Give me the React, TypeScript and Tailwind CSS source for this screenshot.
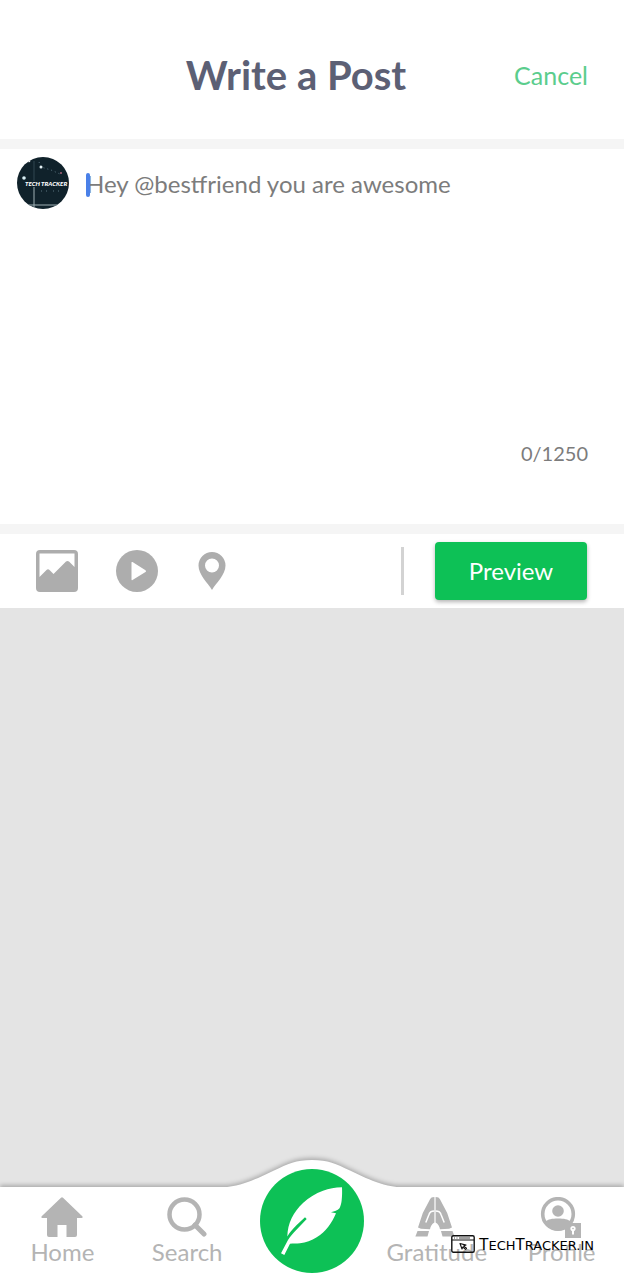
import React from "react";

function Avatar() {
  return (
    <svg viewBox="0 0 52 52" className="size-13 shrink-0" role="img" aria-label="Tech Tracker">
      <defs>
        <clipPath id="avatar-clip">
          <circle cx="26" cy="26" r="26" />
        </clipPath>
      </defs>
      <g clipPath="url(#avatar-clip)">
        <rect width="52" height="52" fill="#10222b" />
        <path d="M17 30v22M8 48h34" stroke="#9fb0b5" strokeWidth="1" />
        <path d="M17 4v20" stroke="#3b525c" strokeWidth=".8" />
        <path d="M22 5l2 5 10 3 9 4" stroke="#5b7480" strokeWidth="1" strokeDasharray="1 3" fill="none" />
        <path d="M24 34h8M36 34h7" stroke="#5b7480" strokeWidth="1" strokeDasharray="1 4" />
        <circle cx="24" cy="10" r="1.5" fill="#e6f2f5" />
        <circle cx="7" cy="21" r="1.8" fill="#d9f0f6" />
        <circle cx="12" cy="4" r="1.3" fill="#fff" />
        <circle cx="44" cy="16" r="1" fill="#a9637b" />
        <text x="8" y="29" fill="#fff" fontFamily="Lato, sans-serif" fontSize="6.2" fontWeight="900" fontStyle="italic">
          TECH TRACKER
        </text>
      </g>
    </svg>
  );
}

function ImageIcon() {
  return (
    <svg viewBox="0 0 42 42" className="size-[42px]" fill="#adadad" aria-hidden="true">
      <path
        fillRule="evenodd"
        d="M4 0h34a4 4 0 0 1 4 4v34a4 4 0 0 1-4 4H4a4 4 0 0 1-4-4V4a4 4 0 0 1 4-4ZM3.500 3.500v23.500l7-7q1.500-1.300 3 0l4 4L30 11.500q1.500-1 3 0L38.500 17V3.500Z"
      />
    </svg>
  );
}

function PlayIcon() {
  return (
    <svg viewBox="0 0 42 42" className="size-[42px]" aria-hidden="true">
      <circle cx="21" cy="21" r="21" fill="#adadad" />
      <path d="M15.500 12.500v17q0 1.200 1 .6l13-8q1.200-.9 0-1.800l-13-8.200q-1-.6-1 .4Z" fill="#fff" />
    </svg>
  );
}

function PinIcon() {
  return (
    <svg viewBox="-2 0 32 38" className="h-[38px] w-8" fill="#adadad" aria-hidden="true">
      <path
        fillRule="evenodd"
        d="M14 0a13.500 13.500 0 0 1 13.500 13.500C27.500 23 18 31 14 38 10 31 .5 23 .5 13.500A13.500 13.500 0 0 1 14 0Zm0 6.500a7 7 0 1 0 0 14 7 7 0 0 0 0-14Z"
      />
    </svg>
  );
}

function HomeIcon() {
  return (
    <svg viewBox="0 0 42 40" className="h-10 w-[42px]" fill="#b4b4b4" aria-hidden="true">
      <path d="M20 .8q1-1 2 0l19.300 18.500q1 1.700-.8 1.700H36v17q0 2-2 2h-8.500V28h-9v12H8q-2 0-2-2V21H1.500q-1.800 0-.8-1.700Z" />
    </svg>
  );
}

function SearchIcon() {
  return (
    <svg viewBox="0 0 40 40" className="size-10" fill="none" stroke="#b4b4b4" aria-hidden="true">
      <circle cx="17.500" cy="17.500" r="15" strokeWidth="4.500" />
      <path d="M28 28l9 9" strokeWidth="5" strokeLinecap="round" />
    </svg>
  );
}

function Hand() {
  return (
    <>
      <path
        d="M19.400 0c-2.400 0-3.700.8-4.500 2.500L7.800 16 3 30.500 6 31.800l9 .4c.5-2.800 1.700-5 4.400-6.700Z"
        fill="#b4b4b4"
      />
      <path d="M10.800 25.500l3-7.500c.7-2.600 2-3.900 5.600-3.900" fill="none" stroke="#fff" strokeWidth="1.500" />
      <path d="M2.500 34H14l-1.500 5.500H.4Z" fill="#b4b4b4" />
    </>
  );
}

function HandsIcon() {
  return (
    <svg viewBox="0 0 40 40" className="mr-1 size-10" aria-hidden="true">
      <Hand />
      <g transform="matrix(-1 0 0 1 40 0)">
        <Hand />
      </g>
    </svg>
  );
}

function ProfileIcon() {
  return (
    <svg viewBox="0 0 42 42" className="mr-0.5 size-[42px]" aria-hidden="true">
      <circle cx="18" cy="17" r="15.300" fill="#fff" stroke="#b4b4b4" strokeWidth="3.600" />
      <circle cx="18" cy="14" r="5.800" fill="#b4b4b4" />
      <path d="M5 25c3-3 7-3.500 13-3.500S28 22 31 25c-3 6-8 8.500-13 8.500S8 31 5 25Z" fill="#b4b4b4" />
      <rect x="25" y="26" width="16" height="15" fill="#b4b4b4" />
      <circle cx="33" cy="31.500" r="2.600" fill="#fff" />
      <path d="M32 32h2v5.500h-2Z" fill="#fff" />
      <circle cx="33" cy="31.500" r=".8" fill="#b4b4b4" />
    </svg>
  );
}

function FeatherIcon() {
  return (
    <svg viewBox="0 0 104 104" className="size-26" aria-hidden="true">
      <path
        d="M82 18.300C75 18.300 69 19.500 63 21.700 55.500 24.500 48.500 28.800 43 34 38 38.500 34.500 43.500 31.700 49 28.800 55 27.500 61 27.300 67.500 30 63 33 59.500 36.700 56L45 48.300 46.700 50 36.700 60.500C33 64.500 30 67.500 28 71L21 84.300 24.300 86 30 74.800C33 74.500 36.500 74.800 40 74.300 46 73.700 51.500 71.700 56.700 68.300 61.500 65.300 65 62 68.300 57.700 71.500 53.700 74 49 76 44.300L71 43.300C74.500 42.500 77.500 41.500 79.500 39.300 80.800 36.500 81.400 34 81.700 31 82.200 27 82.200 22.500 82 18.300Z"
        fill="#fff"
      />
    </svg>
  );
}

function Watermark() {
  return (
    <div className="pointer-events-none absolute top-12 right-[30px] flex items-start gap-1 text-black">
      <svg viewBox="0 0 24 18" className="h-[18px] w-6" fill="none" stroke="#111" aria-hidden="true">
        <rect x=".8" y=".8" width="22.400" height="16.400" rx="1.500" strokeWidth="1.400" />
        <path d="M1 5h22" strokeWidth="1" />
        <path d="M3 3h1M5.500 3h1M8 3h11" strokeWidth=".8" />
        <path d="M9 8.500l6 1.600-2.300 1 2.800 2.200-1 1-2.700-2.300-.8 2Z" strokeWidth="1.100" strokeLinejoin="round" />
      </svg>
      <span className="pt-0.5 font-['DejaVu_Sans',sans-serif] text-[13px] leading-4">
        <span className="text-[15px] leading-4">T</span>ECH<span className="text-[15px] leading-4">T</span>RACKER.IN
      </span>
    </div>
  );
}

function NavItem({ label, icon }: { label: string; icon: React.ReactNode }) {
  return (
    <a href="#" className="flex flex-1 flex-col items-center pt-2.5 text-[#b4b4b4]">
      <span className="flex h-[41px] items-start">{icon}</span>
      <span className="text-2xl leading-7">{label}</span>
    </a>
  );
}

export default function App() {
  return (
    <div className="flex min-h-screen flex-col bg-[#e4e4e4] font-['Lato','Open_Sans',sans-serif]">
      <header className="grid grid-cols-[1fr_auto_1fr] items-center border-b-10 border-[#f5f5f5] bg-white px-9 pt-[46px] pb-[34px]">
        <h1 className="col-start-2 pr-8 text-[40px] leading-[59px] font-bold text-[#5c6075]">Write a Post</h1>
        <button type="button" className="justify-self-end text-[25px] text-[#5bcd8d]">
          Cancel
        </button>
      </header>

      <main className="flex flex-1 flex-col">
        <section className="border-b-10 border-[#f5f5f5] bg-white pt-2 pr-9 pb-14 pl-[17px]">
          <div className="flex items-start gap-[17px]">
            <Avatar />
            <div className="relative flex-1 pt-[11px]">
              <span className="absolute top-4 left-0 h-6 w-1 rounded-sm bg-[#4a80e8]" />
              <textarea
                aria-label="Post text"
                maxLength={1250}
                placeholder="Hey @bestfriend you are awesome"
                className="block h-[270px] w-full resize-none bg-transparent text-2xl text-[#7c7c7c] outline-none placeholder:text-[#7c7c7c]"
              />
            </div>
          </div>
          <p className="text-right text-xl leading-[30px] text-[#7c7c7c]">0/1250</p>
        </section>

        <section className="flex items-center bg-white py-2 pr-[37px] pl-9">
          <div className="flex flex-1 items-center gap-[38px]">
            <button type="button" aria-label="Add image">
              <ImageIcon />
            </button>
            <button type="button" aria-label="Add video">
              <PlayIcon />
            </button>
            <button type="button" aria-label="Add location">
              <PinIcon />
            </button>
          </div>
          <div className="mr-[31px] h-12 w-[3px] bg-[#d3d3d3]" />
          <button
            type="button"
            className="h-[58px] w-38 rounded bg-[#0dc156] text-2xl text-white shadow-[0_2px_4px_rgba(0,0,0,0.3)]"
          >
            Preview
          </button>
        </section>
      </main>

      <nav className="relative drop-shadow-[0_-2px_2px_rgba(0,0,0,0.25)]">
        <svg
          viewBox="0 0 200 28"
          className="absolute -top-[27px] left-1/2 h-7 w-[200px] -translate-x-1/2"
          aria-hidden="true"
        >
          <path d="M0 28C30 28 45 18 62 10.500 76 4 84 0 100 0s24 4 38 10.500C155 18 170 28 200 28Z" fill="#fff" />
        </svg>
        <div className="flex h-[93px] bg-white">
          <NavItem label="Home" icon={<HomeIcon />} />
          <NavItem label="Search" icon={<SearchIcon />} />
          <div className="relative flex-1">
            <button
              type="button"
              aria-label="Write a post"
              className="absolute -top-[18px] left-1/2 size-26 -translate-x-1/2 rounded-full bg-[#0dc156]"
            >
              <FeatherIcon />
            </button>
          </div>
          <NavItem label="Gratitude" icon={<HandsIcon />} />
          <NavItem label="Profile" icon={<ProfileIcon />} />
        </div>
        <Watermark />
      </nav>
    </div>
  );
}
